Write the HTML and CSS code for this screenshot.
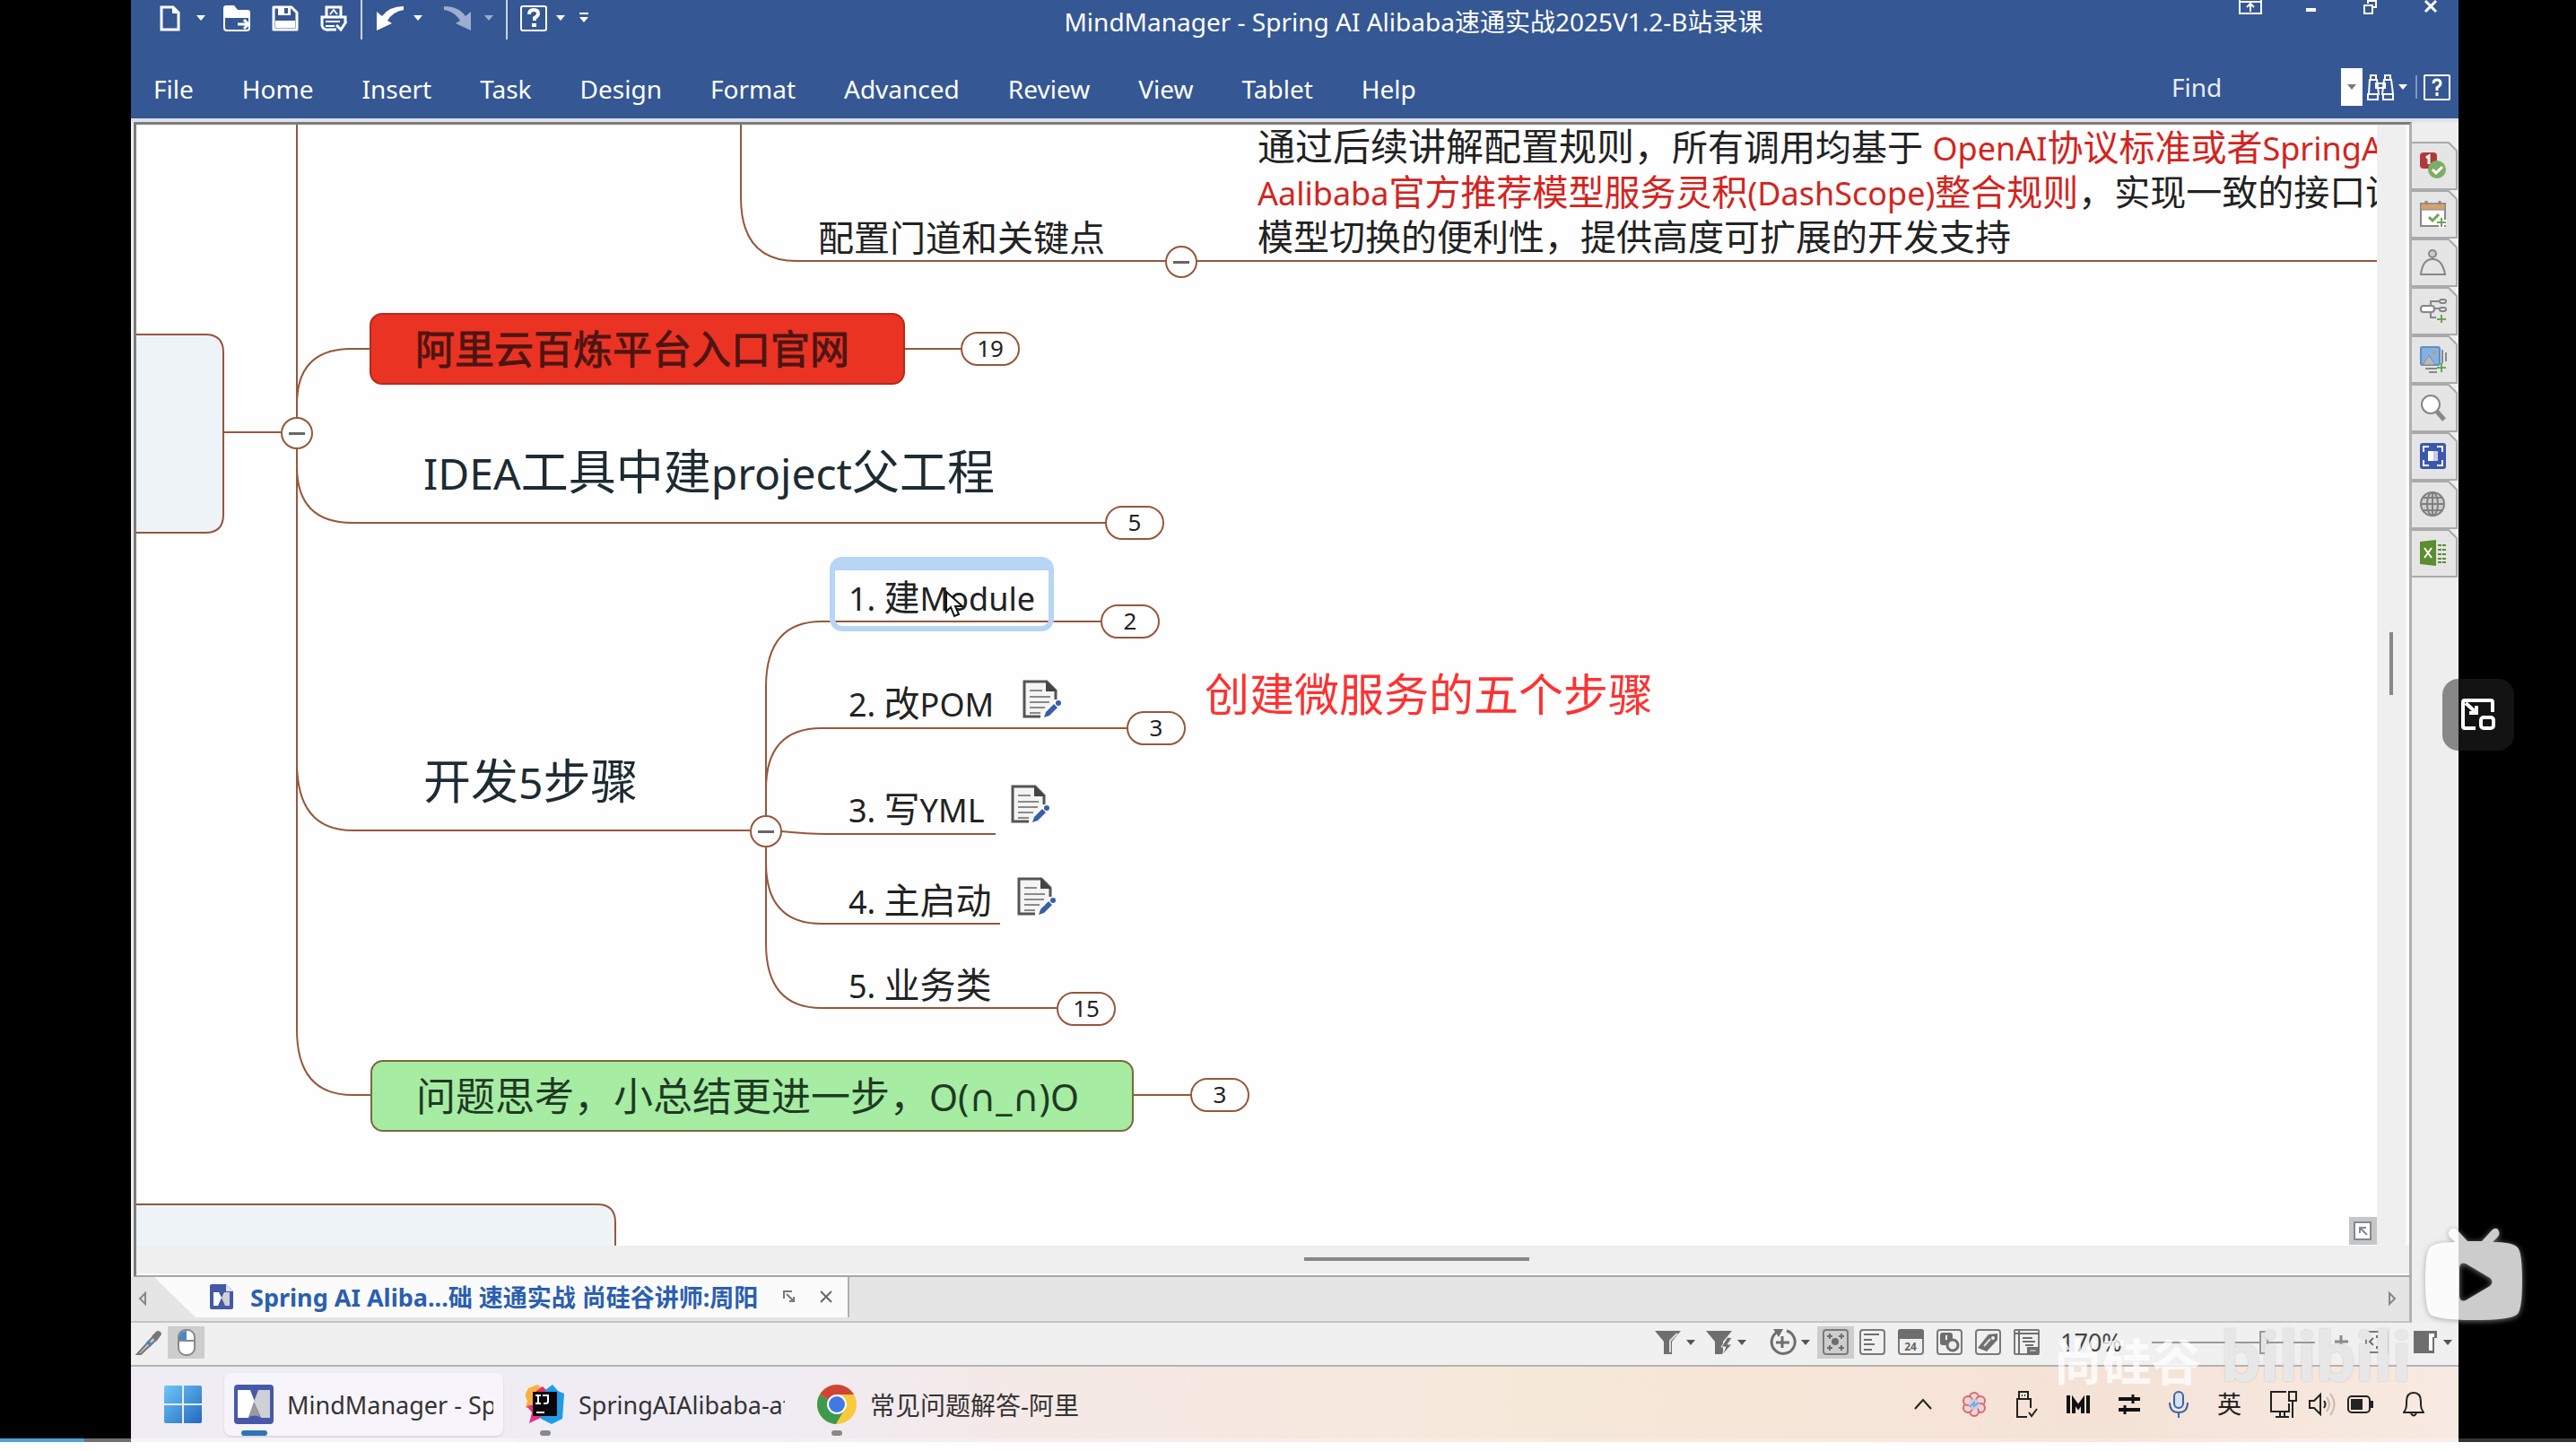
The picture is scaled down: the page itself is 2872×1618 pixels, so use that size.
FILE: index.html
```html
<!DOCTYPE html>
<html lang="zh-CN">
<head>
<meta charset="utf-8">
<meta name="viewport" content="width=device-width, initial-scale=1">
<title>MindManager - Spring AI Alibaba速通实战2025V1.2-B站录课</title>
<link rel="stylesheet" href="styles.css">
</head>
<body>
<svg class="defs" aria-hidden="true">
  <symbol id="caret" viewBox="0 0 10 6"><path d="M0 0h10L5 6z" fill="currentColor"/></symbol>
  <symbol id="note" viewBox="0 0 43 43">
    <path d="M20 41H2V2h25l10 10v10" fill="#f4f4f4" stroke="#555" stroke-width="3"/>
    <path d="M26 1v12h12z" fill="#444"/>
    <path d="M8 12h14M8 19h23M8 25h22M8 31h17M8 37h12" stroke="#8a8a8a" stroke-width="2"/>
    <path d="M24 42l2-6 9-9 4 4-9 9z" fill="#3a5ea8"/><circle cx="40" cy="26" r="3" fill="#3a5ea8"/>
  </symbol>
  <symbol id="mm" viewBox="0 0 44 44">
    <rect width="44" height="44" rx="4" fill="#4659a8"/>
    <path d="M4 6h14l5 13-7 18H4z" fill="#fff"/><path d="M40 6H27l-5 13 8 18h10z" fill="#cfd0d4"/><path d="M22 19l7 17q-6-3-13 0z" fill="#9a9aa0"/>
  </symbol>
</svg>
<main class="player">
  <div class="window">
    <header class="ribbon">
      <div class="titlebar">
        <div class="quick">
          <button aria-label="New"><svg width="23" height="29" viewBox="0 0 23 29"><path d="M2 2h13l6 6v19H2z" fill="none" stroke="#fff" stroke-width="3"/><path d="M14 1v8h8z" fill="#fff"/></svg></button>
          <button class="drop" aria-label="New options"><svg width="10" height="6"><use href="#caret"/></svg></button>
          <button class="open" aria-label="Open"><svg width="30" height="29" viewBox="0 0 30 29"><path d="M0 14V3q0-3 3-3h9l4 5h11q3 0 3 3v6z" fill="#fff"/><path d="M1 12v13q0 3 3 3h22q3 0 3-3V12" fill="none" stroke="#fff" stroke-width="2"/><path d="M16 21h12M23 16l5 5-5 5" fill="none" stroke="#fff" stroke-width="3"/></svg></button>
          <button class="save" aria-label="Save"><svg width="30" height="29" viewBox="0 0 30 29"><path d="M2 2h20l6 6v19H2z" fill="none" stroke="#fff" stroke-width="3" stroke-linejoin="round"/><path d="M7 1h14v10H7zM4 17h22v8H4z" fill="#fff"/><path d="M14 3h4v6h-4z" fill="#355793"/></svg></button>
          <button class="print" aria-label="Print"><svg width="31" height="29" viewBox="0 0 31 29"><path d="M7 12V2h16v10M2 23V13h26v6M2 23q2 5 8 4h8" fill="none" stroke="#fff" stroke-width="3"/><path d="M11 10l4-5 4 5M6 18h16M6 23h10" fill="none" stroke="#fff" stroke-width="2"/><path d="M18 22l5 5 6-9" fill="none" stroke="#fff" stroke-width="3"/></svg></button>
          <span class="rule"></span>
          <button class="undo" aria-label="Undo"><svg width="31" height="29" viewBox="0 0 31 29"><path d="M0 28V7l6 5Q14 1 30 1v4Q18 7 12 17l5 3z" fill="#fff"/></svg></button>
          <button class="drop" aria-label="Undo options"><svg width="10" height="6"><use href="#caret"/></svg></button>
          <button class="redo" aria-label="Redo" disabled><svg width="31" height="29" viewBox="0 0 31 29"><path d="M30 28V7l-6 5Q16 1 0 1v4q12 2 18 12l-5 3z" fill="#9cadd0"/></svg></button>
          <button class="drop dim" aria-label="Redo options" disabled><svg width="10" height="6"><use href="#caret"/></svg></button>
          <span class="rule"></span>
          <button aria-label="Help"><svg width="30" height="29" viewBox="0 0 30 29"><rect x="1" y="1" width="28" height="27" rx="2" fill="none" stroke="#fff" stroke-width="2"/><path d="M10 10q0-5 5-5t5 4q0 3-4 5v3" fill="none" stroke="#fff" stroke-width="4"/><path d="M13 20h5v4h-5z" fill="#fff"/></svg></button>
          <button class="drop" aria-label="Help options"><svg width="10" height="6"><use href="#caret"/></svg></button>
          <button class="custom" aria-label="Customize toolbar"><svg width="10" height="12" viewBox="0 0 10 12"><path d="M0 0h10v2H0zM0 5h10l-5 6z" fill="#fff"/></svg></button>
        </div>
        <h1 class="title">MindManager - Spring AI Alibaba速通实战2025V1.2-B站录课</h1>
        <div class="winbtns">
          <button aria-label="Ribbon display"><svg width="26" height="16" viewBox="0 0 26 16"><path d="M1 0v15h24V0M1 2h24M13 13V5M9 8l4-4 4 4" fill="none" stroke="#fff" stroke-width="2"/></svg></button>
          <button aria-label="Minimize"><svg width="26" height="16" viewBox="0 0 26 16"><path d="M8 9h11v4H8z" fill="#fff"/></svg></button>
          <button aria-label="Restore"><svg width="26" height="16" viewBox="0 0 26 16"><path d="M10 4V1h9v7h-4M6 6h9v9H6z" fill="none" stroke="#fff" stroke-width="2"/></svg></button>
          <button aria-label="Close"><svg width="26" height="16" viewBox="0 0 26 16"><path d="M7 1l12 12M19 1L7 13" stroke="#fff" stroke-width="3"/></svg></button>
        </div>
      </div>
      <div class="menubar">
        <nav class="menus">
          <button>File</button><button>Home</button><button>Insert</button><button>Task</button><button>Design</button><button>Format</button><button>Advanced</button><button>Review</button><button>View</button><button>Tablet</button><button>Help</button>
        </nav>
        <div class="search">
          <input class="find" type="text" placeholder="Find" aria-label="Find">
          <button class="findlist" aria-label="Find history"><svg width="10" height="6"><use href="#caret"/></svg></button>
          <button class="binoc" aria-label="Search"><svg width="30" height="29" viewBox="0 0 30 29"><path d="M4 1h6v5H4zM20 1h6v5h-6zM3 6h8l2 16H2zM19 6h8l2 16H17zM10 10h10v5H10zM1 22h11v6H1zM18 22h11v6H18z" fill="none" stroke="#fff" stroke-width="2"/></svg></button>
          <button aria-label="Search options"><svg width="10" height="6"><use href="#caret"/></svg></button>
          <span class="bar"></span>
          <button aria-label="Help topics"><svg width="30" height="29" viewBox="0 0 30 29"><rect x="1" y="1" width="28" height="27" rx="1" fill="none" stroke="#fff" stroke-width="2"/><path d="M11 10q0-4 4-4t4 4q0 2-4 5v3M15 20v4" fill="none" stroke="#fff" stroke-width="3"/></svg></button>
        </div>
      </div>
    </header>

    <div class="workspace">
      <div class="docs">
        <div class="frame">
          <section class="canvas" aria-label="Mind map">
            <svg class="links" aria-hidden="true">
              <g transform="translate(-152 -139)" fill="none" stroke="#96573c" stroke-width="2">
                <path d="M120 373H229q20 0 20 20V574q0 20-20 20H120z" fill="#eef3f8"/>
                <path d="M120 1343H666q20 0 20 20v60H120z" fill="#eef3f8"/>
                <path d="M249 482H313M331 100V1148q0 73 62 73h20M413 389h-25q-57 2-57 62V520q0 63 62 63h840M331 850q0 76 62 76h443"/>
                <path d="M826 100V220q0 71 62 71h412M1334 291H2700M1009 389h64M1264 1221h64"/>
                <path d="M854 927V766q0-73 62-73h312M854 880q0-68 62-68h341M871 927q30 3 50 3h189M854 927v35q0 68 62 68h199M854 927V1052q0 72 62 72h262"/>
              </g>
            </svg>
            <p class="topic t-config">配置门道和关键点</p>
            <p class="topic t-para"><b>通过后续讲解配置规则，</b>所有调用均基于 <em><i>OpenAI</i>协议标准或者<i>SpringAI</i></em><br><em><i>Aalibaba</i>官方推荐模型服务灵积<i>(DashScope)</i>整合规则</em>，实现一致的接口设计<br>模型切换的便利性，提供高度可扩展的开发支持</p>
            <p class="topic box t-red">阿里云百炼平台入口官网</p>
            <p class="topic big t-idea"><i>IDEA</i>工具中建<i>project</i>父工程</p>
            <p class="topic big t-dev">开发<i>5</i>步骤</p>
            <span class="selection"></span>
            <p class="topic t-s1"><i>1. </i>建<i>Module</i></p>
            <p class="topic t-s2"><i>2. </i>改<i>POM</i></p>
            <p class="topic t-s3"><i>3. </i>写<i>YML</i></p>
            <p class="topic t-s4"><i>4. </i>主启动</p>
            <p class="topic t-s5"><i>5. </i>业务类</p>
            <p class="topic box t-green">问题思考，小总结更进一步，<i>O(<span class="eye">∩</span>_<span class="eye">∩</span>)O</i></p>
            <svg class="note n2" role="img" aria-label="Notes"><use href="#note"/></svg>
            <svg class="note n3" role="img" aria-label="Notes"><use href="#note"/></svg>
            <svg class="note n4" role="img" aria-label="Notes"><use href="#note"/></svg>
            <button class="toggle g-config" aria-label="Collapse"></button>
            <button class="toggle g-root" aria-label="Collapse"></button>
            <button class="toggle g-dev" aria-label="Collapse"></button>
            <button class="count c-19">19</button>
            <button class="count c-5">5</button>
            <button class="count c-2">2</button>
            <button class="count c-3a">3</button>
            <button class="count c-15">15</button>
            <button class="count c-3b">3</button>
            <p class="remark">创建微服务的五个步骤</p>
            <svg class="cursor" width="22" height="32" viewBox="0 0 22 32" aria-hidden="true"><path d="M2 2v22l5-5 4 10 5-2-4-9h8z" fill="#fff" stroke="#111" stroke-width="2"/></svg>
            <button class="fit" aria-label="Overview"><svg width="31" height="31" viewBox="0 0 31 31"><rect width="31" height="31" fill="#c4c6c8"/><rect x="6" y="6" width="18" height="19" fill="#fff" stroke="#85888b" stroke-width="2"/><path d="M12 18v-6h7M12 12l8 8" fill="none" stroke="#85888b" stroke-width="2"/></svg></button>
          </section>
          <div class="vscroll"><span></span></div>
          <div class="hscroll"><span></span></div>
        </div>
        <div class="tabstrip">
          <button class="tabnav" aria-label="Previous tab"><svg width="12" height="18" viewBox="0 0 12 18"><path d="M9 3v12L3 9z" fill="none" stroke="#888" stroke-width="2"/></svg></button>
          <div class="doctab">
            <svg width="26" height="28" viewBox="0 0 26 28"><path d="M0 2q0-2 2-2h16l8 8v18q0 2-2 2H2q-2 0-2-2z" fill="#4659a8"/><path d="M18 0l8 8h-8z" fill="#dfe3f5"/><path d="M4 9h6l3 6-4 9H4z" fill="#fff"/><path d="M22 9h-6l-3 6 4 9h5z" fill="#cfd0d4"/></svg>
            <strong>Spring AI Aliba...础 速通实战 尚硅谷讲师:周阳</strong>
            <button aria-label="Float tab"><svg width="14" height="14" viewBox="0 0 14 14"><path d="M1 9V1h9M4 4l8 8M12 7v5H7" fill="none" stroke="#777" stroke-width="2"/></svg></button>
            <button class="x" aria-label="Close tab"><svg width="14" height="14" viewBox="0 0 14 14"><path d="M1 1l12 12M13 1L1 13" stroke="#666" stroke-width="2"/></svg></button>
          </div>
          <button class="tabnav next" aria-label="Next tab"><svg width="12" height="18" viewBox="0 0 12 18"><path d="M3 3v12l6-6z" fill="none" stroke="#888" stroke-width="2"/></svg></button>
        </div>
      </div>
      <aside class="panes">
        <button aria-label="Index"><svg viewBox="0 0 52 54"><path class="tab" d="M0 1H41L50 10V53H0"/><g transform="translate(9 12)"><rect width="19" height="18" rx="4" fill="#b03a3a"/><path d="M7 6l3-2v9" fill="none" stroke="#fff" stroke-width="3"/><circle cx="19" cy="19" r="10" fill="#7cae68"/><path d="M14 19l4 4 7-7" fill="none" stroke="#fff" stroke-width="3"/></g></svg></button>
        <button aria-label="Tasks"><svg viewBox="0 0 52 54"><path class="tab" d="M0 1H41L50 10V53H0"/><g transform="translate(9 12)"><path d="M1 3h27v25H1z" fill="#fff" stroke="#888" stroke-width="2"/><path d="M1 3h27v7H1z" fill="#d3a36c" stroke="#888"/><path d="M7 0v4M22 0v4" stroke="#888" stroke-width="3"/><path d="M10 18l4 4 7-7" fill="none" stroke="#6aa555" stroke-width="3"/><path d="M24 17v13M18 24h12" stroke="#fff" stroke-width="6"/><path d="M24 19v10M19 24h10" stroke="#6aa555" stroke-width="2"/></g></svg></button>
        <button aria-label="Resources"><svg viewBox="0 0 52 54"><path class="tab" d="M0 1H41L50 10V53H0"/><g transform="translate(9 12)" fill="none" stroke="#868686" stroke-width="2"><circle cx="14" cy="5" r="4" fill="#ccc"/><path d="M1 28q2-17 13-17t14 17z"/></g></svg></button>
        <button aria-label="Map parts"><svg viewBox="0 0 52 54"><path class="tab" d="M0 1H41L50 10V53H0"/><g transform="translate(9 12)" fill="none" stroke="#868686" stroke-width="2"><rect x="1" y="9" width="15" height="7" rx="3" fill="#fff"/><path d="M16 12h6M12 9V4h9M12 16v6h6"/><rect x="22" y="2" width="7" height="4" rx="2"/><rect x="22" y="11" width="7" height="4" rx="2"/><path d="M24 19v9M19 24h10" stroke="#6aa555"/></g></svg></button>
        <button aria-label="Library"><svg viewBox="0 0 52 54"><path class="tab" d="M0 1H41L50 10V53H0"/><g transform="translate(9 12)"><rect x="1" y="1" width="21" height="20" rx="2" fill="#84b1e2" stroke="#5d8dc9" stroke-width="2"/><path d="M3 21l7-11 7 11z" fill="#b9b9b9" stroke="#888"/><circle cx="16" cy="7" r="2" fill="#b7a25a"/><path d="M25 4v15M29 7v10M6 25h13M10 29h9" fill="none" stroke="#888" stroke-width="2"/><path d="M24 19v10M19 24h10" stroke="#6aa555" stroke-width="2"/></g></svg></button>
        <button aria-label="Search pane"><svg viewBox="0 0 52 54"><path class="tab" d="M0 1H41L50 10V53H0"/><g transform="translate(9 12)"><path d="M19 19l8 9" stroke="#888" stroke-width="5"/><circle cx="12" cy="11" r="10" fill="#fff" stroke="#868686" stroke-width="2"/></g></svg></button>
        <button aria-label="Snap"><svg viewBox="0 0 52 54"><path class="tab" d="M0 1H41L50 10V53H0"/><g transform="translate(9 12)"><rect width="29" height="29" rx="3" fill="#3b57ae"/><path d="M4 10V4h6M19 4h6v6M25 19v6h-6M10 25H4v-6" fill="none" stroke="#fff" stroke-width="2"/><path d="M9 9h6v11H9z" fill="#fff"/><path d="M15 9h5v11h-5z" fill="#c9cde2"/></g></svg></button>
        <button aria-label="Browser"><svg viewBox="0 0 52 54"><path class="tab" d="M0 1H41L50 10V53H0"/><g transform="translate(9 12)" fill="none" stroke="#808080" stroke-width="2"><circle cx="14" cy="14" r="13" fill="#ccc"/><ellipse cx="14" cy="14" rx="6" ry="13"/><path d="M1 14h26M3 7h22M3 21h22M14 1v26"/></g></svg></button>
        <button aria-label="Excel"><svg viewBox="0 0 52 54"><path class="tab" d="M0 1H41L50 10V53H0"/><g transform="translate(9 12)"><path d="M0 2l18-2v29l-18-2z" fill="#5c8d2f"/><path d="M5 9l8 11M13 9L5 20" stroke="#fff" stroke-width="2"/><path d="M20 6h9M20 11h9M20 16h9M20 21h9M20 25h9" stroke="#5c8d2f" stroke-width="2" stroke-dasharray="4 1"/></g></svg></button>
      </aside>
    </div>

    <div class="statusbar">
      <div class="modes">
        <button aria-label="Pen"><svg width="32" height="30" viewBox="0 0 32 30"><path d="M3 28L20 9l4 3L7 28z" fill="#c8c8c8" stroke="#777" stroke-width="2"/><path d="M19 8l6-6q5 0 5 4l-5 7z" fill="#777"/><path d="M14 14l5 4" stroke="#4d86c8" stroke-width="4"/></svg></button>
        <button class="on" aria-label="Mouse"><svg width="20" height="30" viewBox="0 0 20 30"><rect x="1" y="1" width="18" height="28" rx="8" fill="#fff" stroke="#888" stroke-width="2"/><path d="M2 13V9q0-7 8-7v11z" fill="#4d86c8"/><path d="M2 13h16" stroke="#888" stroke-width="2"/></svg></button>
      </div>
      <div class="views">
        <button class="pair" aria-label="Filter"><svg width="30" height="29" viewBox="0 0 30 29"><path d="M0 2h29L19 14v14h-9V14z" fill="#6e6e6e"/><path d="M25 5l-8 8v13" fill="none" stroke="#ddd" stroke-width="2"/></svg><svg width="10" height="6"><use href="#caret"/></svg></button>
        <button class="pair wide" aria-label="Power filter"><svg width="30" height="29" viewBox="0 0 30 29"><path d="M0 2h29L19 14v14h-9V14z" fill="#6e6e6e"/><path d="M24 9l-7 11h5l-4 9 11-12h-5l5-7z" fill="#6e6e6e" stroke="#eee" stroke-width="1"/></svg><svg width="10" height="6"><use href="#caret"/></svg></button>
        <button class="pair" aria-label="Show detail"><svg width="30" height="29" viewBox="0 0 30 29"><path d="M19 2a13 13 0 1 1-10 1M14 8v13M7 15h15" fill="none" stroke="#6e6e6e" stroke-width="3"/><path d="M4 0h11l-5 9z" fill="#6e6e6e"/></svg><svg width="10" height="6"><use href="#caret"/></svg></button>
        <button class="view on" aria-label="Map view"><svg width="29" height="29" viewBox="0 0 29 29"><rect class="o" x="1" y="1" width="27" height="27" rx="3"/><circle cx="14" cy="14" r="4" fill="#6e6e6e"/><path d="M5 8h6M8 5v6M18 8h6M21 5v6M5 21h6M8 18v6M18 21h6M21 18v6" stroke="#6e6e6e" stroke-width="2"/></svg></button>
        <button class="view" aria-label="Outline view"><svg width="29" height="29" viewBox="0 0 29 29"><rect class="o" x="1" y="1" width="27" height="27" rx="3"/><path d="M5 6h17M5 12h9M5 17h12M5 23h9" stroke="#6e6e6e" stroke-width="2"/></svg></button>
        <button class="view" aria-label="Schedule view"><svg width="29" height="29" viewBox="0 0 29 29"><rect class="o" x="1" y="1" width="27" height="27" rx="3"/><path d="M0 3q0-3 3-3h23q3 0 3 3v8H0z" fill="#6e6e6e"/><text x="14" y="24" class="day">24</text></svg></button>
        <button class="view" aria-label="Icon view"><svg width="29" height="29" viewBox="0 0 29 29"><rect class="o" x="1" y="1" width="27" height="27" rx="3"/><rect x="4" y="4" width="14" height="14" rx="3" fill="#6e6e6e"/><circle cx="18" cy="18" r="6" fill="#eee" stroke="#6e6e6e" stroke-width="3"/><path d="M11 7v5" stroke="#fff" stroke-width="2"/></svg></button>
        <button class="view" aria-label="Tag view"><svg width="29" height="29" viewBox="0 0 29 29"><rect class="o" x="1" y="1" width="27" height="27" rx="3"/><path d="M3 21L15 6l10-1v7L13 25z" fill="#6e6e6e"/><circle cx="20" cy="10" r="2" fill="#eee"/><path d="M10 19l7-8" stroke="#ddd" stroke-width="2"/></svg></button>
        <button class="view" aria-label="Gantt view"><svg width="29" height="29" viewBox="0 0 29 29"><rect class="o" x="1" y="1" width="27" height="27" rx="1"/><path d="M1 5h27M6 1v27M10 10h11M10 14h14M13 18h9" stroke="#6e6e6e" stroke-width="2"/><path d="M15 20h13v9H15z" fill="#6e6e6e"/><path d="M18 24h7" stroke="#eee"/></svg></button>
        <output class="percent">170%</output>
        <input class="zoom" type="range" min="0" max="100" value="70" aria-label="Zoom">
        <button class="plus" aria-label="Zoom in"><svg width="15" height="15" viewBox="0 0 15 15"><path d="M7 0v15M0 7h15" stroke="#8a8a8a" stroke-width="3"/></svg></button>
        <button class="fitmap" aria-label="Fit map"><svg width="26" height="25" viewBox="0 0 26 25"><rect class="o" x="1" y="1" width="24" height="23"/><path d="M9 8l-4 4 4 4M17 8l4 4-4 4M13 5v3M13 17v3" fill="none" stroke="#6e6e6e" stroke-width="2"/></svg></button>
        <button class="pair" aria-label="Task panes"><svg width="26" height="25" viewBox="0 0 26 25"><path d="M0 0h26v8h-3v17H0z" fill="#6e6e6e"/><path d="M17 3h6v4h-2v15h-4z" fill="#fff"/></svg><svg width="10" height="6"><use href="#caret"/></svg></button>
      </div>
    </div>

    <footer class="taskbar">
      <div class="apps">
        <button class="start" aria-label="Start"><svg width="42" height="42" viewBox="0 0 42 42"><defs><linearGradient id="w" x1="0" y1="0" x2="1" y2="1"><stop offset="0" stop-color="#6cc8f8"/><stop offset="1" stop-color="#2468bf"/></linearGradient></defs><path d="M2 0h18v20H0V2q0-2 2-2zM22 0h18q2 0 2 2v18H22zM0 22h20v20H2q-2 0-2-2zM22 22h20v18q0 2-2 2H22z" fill="url(#w)"/></svg></button>
        <button class="app active"><svg width="44" height="44"><use href="#mm"/></svg><span>MindManager - Spring</span></button>
        <button class="app"><svg width="44" height="44" viewBox="0 0 44 44"><path d="M3 4l10-4 10 6-4 20H0l2-8-3-6z" fill="#fbb040"/><path d="M1 24l18-4v16L4 43l3-12z" fill="#e8338b"/><path d="M12 7l7-5 7 7v10H8z" fill="#e03060"/><path d="M22 6l8-6 6 7 7 3-2 28-12 6-12-6z" fill="#1f9be8"/><rect x="8" y="8" width="27" height="27" fill="#0a0508"/><path d="M11 12h6M14 12v9M11 21h6M19 12h6v7q0 2-3 2h-2M12 31h9" fill="none" stroke="#fff" stroke-width="2"/></svg><span>SpringAIAlibaba-atguigu</span></button>
        <button class="app"><svg width="44" height="44" viewBox="0 0 44 44"><circle cx="22" cy="22" r="22" fill="#f8c93d"/><path d="M22 22L3 11a22 22 0 0 0 18 33l10-17z" fill="#3d9a4c"/><path d="M22 22L3 11A22 22 0 0 1 41 11H22z" fill="#d04437"/><circle cx="22" cy="22" r="11" fill="#fff"/><circle cx="22" cy="22" r="9" fill="#4079e6"/></svg><span class="cjk">常见问题解答-阿里</span></button>
      </div>
      <div class="tray">
        <button aria-label="Hidden icons"><svg width="20" height="28" viewBox="0 0 20 28"><path d="M1 19l9-10 9 10" fill="none" stroke="#222" stroke-width="2"/></svg></button>
        <button aria-label="Assistant"><svg width="30" height="30" viewBox="0 0 30 30"><g fill="#f7d3d3" stroke="#d56a70" stroke-width="2"><circle cx="15" cy="7" r="5"/><circle cx="22" cy="11" r="5"/><circle cx="22" cy="19" r="5"/><circle cx="15" cy="23" r="5"/><circle cx="8" cy="19" r="5"/><circle cx="8" cy="11" r="5"/></g><circle cx="15" cy="15" r="6" fill="#c4cfe6"/><path d="M10 18l5-5v4l5-4" fill="none" stroke="#7fa5d5" stroke-width="2"/></svg></button>
        <button aria-label="Safely remove hardware"><svg width="24" height="30" viewBox="0 0 24 30"><path d="M3 9V1h10v8M16 19V9H1v20h11M14 24l3 4 6-8M6 5h1M9 5h1" fill="none" stroke="#222" stroke-width="2"/></svg></button>
        <button aria-label="M"><svg width="26" height="22" viewBox="0 0 26 22"><path d="M2 1v20M24 1v20M8 21V7l5 7 5-7v14" fill="none" stroke="#111" stroke-width="4"/></svg></button>
        <button aria-label="Audio settings"><svg width="24" height="24" viewBox="0 0 24 24"><path d="M0 6h24M0 18h24" stroke="#111" stroke-width="4"/><path d="M16 1v10M7 13v10" stroke="#111" stroke-width="3"/></svg></button>
        <button aria-label="Microphone"><svg width="22" height="30" viewBox="0 0 22 30"><rect x="6" y="1" width="10" height="18" rx="5" fill="#d7e3f4" stroke="#3c62a8" stroke-width="2"/><path d="M1 13q0 11 10 11t10-11M11 24v6" fill="none" stroke="#3c62a8" stroke-width="2"/></svg></button>
        <button class="ime">英</button>
        <button class="status" aria-label="Network, volume, battery"><svg width="30" height="30" viewBox="0 0 30 30"><path d="M18 1H1v22h20v-9M6 29h15M11 23v6M16 23v6M21 1h8v10h-8zM25 11v19" fill="none" stroke="#222" stroke-width="2"/></svg><svg width="30" height="26" viewBox="0 0 30 26"><path d="M1 9h5l7-7v22l-7-7H1zM17 9q3 4 0 8" fill="none" stroke="#222" stroke-width="2"/><path d="M20 5q6 8 0 16M24 1q9 12 0 24" fill="none" stroke="#c9b8b0" stroke-width="2"/></svg><svg width="30" height="20" viewBox="0 0 30 20"><rect x="1" y="1" width="24" height="18" rx="4" fill="none" stroke="#222" stroke-width="2"/><path d="M4 4h13v12H4zM26 6h3v8h-3z" fill="#222"/></svg></button>
        <button aria-label="Notifications"><svg width="24" height="28" viewBox="0 0 24 28"><path d="M1 23q3-4 3-8v-4q0-10 8-10t8 10v4q0 4 3 8zM9 24q3 5 6 0" fill="none" stroke="#222" stroke-width="2"/></svg></button>
      </div>
    </footer>
  </div>

  <span class="mark author">尚硅谷</span>
  <span class="mark site">bilibili</span>
  <button class="pip" aria-label="Picture in picture"><svg width="38" height="38" viewBox="0 0 38 38"><path d="M16 34H4q-2 0-2-2V5q0-2 2-2h29q2 0 2 2v11M5 6l11 10M17 9v8H9" fill="none" stroke="#fff" stroke-width="4"/><rect x="22" y="22" width="14" height="12" rx="3" fill="none" stroke="#fff" stroke-width="4"/></svg></button>
  <svg class="tv" viewBox="0 0 108 104" role="img" aria-label="bilibili"><path fill-rule="evenodd" fill="#fff" d="M28 2q4-3 8 1l11 12h16L74 3q4-4 7-1 3 4 0 8l-6 6q22 0 28 6 5 6 5 37t-5 37q-6 7-49 7T5 96Q0 90 0 59t5-37q6-6 28-6l-6-6q-3-4 1-8zM38 44v33q1 6 7 4l27-16q5-5 0-9L45 40q-6-2-7 4z"/></svg>
  <div class="progress"><span class="buffer"></span><span class="played"></span></div>
</main>
</body>
</html>
```
FILE: styles.css
```css
* { box-sizing: border-box; }

body {
  margin: 0;
  height: 100vh;
  padding-bottom: 10px;
  display: flex;
  flex-direction: column;
  background: #fff;
  font-family: "Noto Sans", "Noto Sans CJK SC", sans-serif;
  color: #222;
}

button {
  margin: 0;
  padding: 0;
  border: 0;
  background: none;
  color: inherit;
  font: inherit;
  display: flex;
  align-items: center;
  justify-content: center;
}

svg { display: block; flex: none; }
.defs { position: absolute; width: 0; height: 0; }
p, h1 { margin: 0; }

.player {
  position: relative;
  flex: 1;
  min-height: 0;
  padding: 0 131px 0 146px;
  background: #000;
}

.window {
  height: 100%;
  display: flex;
  flex-direction: column;
  background: #efefef;
}

/* Title bar and menus */
.ribbon { background: #355793; color: #fff; }
.titlebar { display: flex; height: 66px; align-items: flex-start; }
.quick { display: flex; align-items: center; height: 40px; padding-left: 32px; }
.quick .drop { width: 10px; margin-left: 18px; }
.quick .undo + .drop, .quick .redo + .drop { margin-left: 14px; }
.quick .rule + button + .drop { margin-left: 10px; }
.quick .drop.dim { color: #9cadd0; }
.quick .open { margin-left: 20px; }
.quick .save { margin-left: 24px; }
.quick .print { margin-left: 24px; }
.quick .undo { margin-left: 2px; }
.quick .undo + .drop { margin-left: 14px; }
.quick .redo { margin-left: 24px; }
.quick .custom { margin-left: 16px; }
.rule { width: 2px; height: 48px; margin: 0 14px 0 14px; background: #c9d3e6; }
.title { flex: 1; text-align: center; font-size: 28px; font-weight: 400; line-height: 48px; }
.winbtns { display: flex; gap: 41px; padding-right: 18px; }

.menubar { display: flex; justify-content: space-between; align-items: center; height: 66px; }
.menus { display: flex; gap: 54px; padding-left: 25px; font-size: 28px; }
.search { display: flex; align-items: center; padding-right: 9px; gap: 5px; height: 60px; margin-bottom: 4px; }
.find { width: 184px; border: 0; background: none; color: #fff; font: 28px "Noto Sans", sans-serif; padding: 0; }
.find::placeholder { color: #e8edf6; opacity: 1; }
.findlist { width: 24px; height: 42px; background: #fff; color: #777; }
.bar { width: 2px; height: 26px; background: #7f96c0; }
.search .bar { margin: 0 2px 0 4px; }

/* Document area */
.workspace { flex: 1; min-height: 0; display: flex; border-top: 4px solid #dde1ea; }
.docs { flex: 1; min-width: 0; display: flex; flex-direction: column; }
.frame {
  flex: 1;
  min-height: 0;
  display: grid;
  grid-template: 1fr 33px / 1fr 36px;
  border: 3px solid #7d7d7d;
  border-right-color: #b0b0b0;
  border-bottom: 2px solid #a6a6a6;
  margin-left: 3px;
}
.canvas { position: relative; overflow: hidden; background: #fefefe; }
.vscroll { display: flex; align-items: center; justify-content: center; border-right: 4px solid #fafafa; }
.vscroll span { width: 4px; height: 70px; margin-bottom: 49px; background: #888; }
.hscroll { grid-column: 1 / 3; display: flex; justify-content: center; border-bottom: 2px solid #fafafa; }
.hscroll span { width: 251px; height: 4px; margin: 13px 0 0 321px; background: #888; }

/* Mind map */
.links { position: absolute; left: 0; top: 0; width: 100%; height: 100%; }
.topic { position: absolute; font-size: 40px; line-height: 50px; white-space: pre; color: #222; }
.topic i { font-style: normal; font-size: 36px; line-height: 1; }
.topic em { font-style: normal; color: #d32420; }
.topic b { font-weight: 400; font-size: 42px; line-height: 1; }
.topic.big { font-size: 53px; line-height: 60px; color: #1d2b33; }
.topic.big i { font-size: 48px; }
.topic.box { font-size: 44px; line-height: 76px; padding-left: 49px; border: 2px solid; border-radius: 14px; }
.t-config { left: 760px; top: 101px; }
.t-para { left: 1250px; top: 0; }
.topic.t-red { left: 260px; top: 210px; width: 597px; background: #eb3323; border-color: #b52a1c; color: #4d1512; -webkit-text-stroke: 1px #4d1512; }
.t-idea { left: 320px; top: 357px; }
.t-dev { left: 320px; top: 702px; }
.t-s1 { left: 794px; top: 502px; }
.t-s2 { left: 794px; top: 620px; }
.t-s3 { left: 794px; top: 738px; }
.t-s4 { left: 794px; top: 840px; }
.t-s5 { left: 794px; top: 934px; }
.topic.t-green { left: 261px; top: 1043px; width: 851px; background: #a6eca3; border-color: #7a6a3a; color: #1f3a24; }
.topic.t-green i { font-size: 41px; }
.eye { font-family: "DejaVu Sans", sans-serif; }
.selection { position: absolute; left: 773px; top: 482px; width: 250px; height: 83px; border: 6px solid #b7d5f5; border-top-width: 15px; border-radius: 14px; }
.note { position: absolute; width: 43px; height: 43px; }
.n2 { left: 988px; top: 619px; }
.n3 { left: 975px; top: 736px; }
.n4 { left: 982px; top: 839px; }
.toggle { position: absolute; width: 36px; height: 36px; border: 2px solid #96573c; border-radius: 50%; background: #fff; }
.toggle::before { content: ""; width: 18px; height: 3px; background: #666; }
.g-config { left: 1147px; top: 135px; }
.g-root { left: 161px; top: 326px; }
.g-dev { left: 684px; top: 770px; }
.count { position: absolute; width: 66px; height: 38px; border: 2px solid #96573c; border-radius: 19px; background: #fff; font-size: 26px; line-height: 32px; padding-bottom: 2px; }
.c-19 { left: 919px; top: 231px; }
.c-5 { left: 1080px; top: 425px; }
.c-2 { left: 1075px; top: 535px; }
.c-3a { left: 1104px; top: 654px; }
.c-15 { left: 1026px; top: 967px; }
.c-3b { left: 1175px; top: 1063px; }
.remark { position: absolute; left: 1191px; top: 602px; font-size: 50px; line-height: 60px; color: #fd3231; font-family: "Noto Sans CJK SC", sans-serif; }
.cursor { position: absolute; left: 901px; top: 519px; }
.fit { position: absolute; right: 0; bottom: 1px; }

/* Document tabs */
.tabstrip { display: flex; align-items: stretch; height: 51px; background: #e5e5e5; border-bottom: 2px solid #c4c4c4; border-right: 3px solid #b0b0b0; }
.tabnav { width: 26px; padding-bottom: 2px; }
.tabnav.next { margin-left: auto; padding-right: 12px; }
.doctab {
  display: flex;
  align-items: center;
  height: 45px;
  padding: 0 17px 2px 62px;
  background: #fbfbfb;
  border-right: 2px solid #b0b0b0;
  clip-path: polygon(0 0, 100% 0, 100% 100%, 46px 100%);
  font-size: 27px;
  color: #2b5fb0;
}
.doctab strong { margin: 0 28px 0 19px; white-space: nowrap; }
.doctab .x { margin-left: 27px; }

/* Task pane tabs */
.panes { width: 52px; padding-top: 22px; background: #eee; }
.panes button { width: 52px; height: 54px; }
.panes svg { width: 52px; height: 54px; }
.tab { fill: #e5e5e5; stroke: #aaa; stroke-width: 2; }

/* Status bar */
.statusbar { display: flex; justify-content: space-between; align-items: center; height: 49px; padding-bottom: 4px; background: #f0f0f0; border-bottom: 2px solid #b3b3b5; color: #555; }
.modes { display: flex; padding-left: 4px; gap: 5px; }
.on { width: 41px; height: 36px; background: #cdcdcd; }
.views { display: flex; align-items: center; padding-right: 7px; }
.pair { gap: 5px; margin-right: 12px; }
.pair.wide { margin-right: 26px; }
.pair:last-child { margin-right: 0; gap: 7px; }
.view { width: 43px; }
.view.on { width: 41px; margin-right: -1px; margin-left: -4px; }
.o { fill: none; stroke: #7a7a7a; stroke-width: 2; }
.day { font: 700 12px "Noto Sans", sans-serif; text-anchor: middle; fill: #666; }
.percent { width: 72px; margin-left: 16px; font-size: 27px; line-height: 36px; color: #444; }
.zoom { appearance: none; width: 182px; height: 26px; margin: 0 22px 0 30px; background: linear-gradient(#999, #999) center / 100% 2px no-repeat; }
.zoom::-webkit-slider-thumb { appearance: none; width: 10px; height: 26px; background: #e6e6e6; border: 2px solid #999; }
.fitmap { margin: 0 28px 0 19px; }

/* Windows taskbar */
.taskbar { display: flex; justify-content: space-between; height: 84px; background: linear-gradient(90deg, #efecf4 0, #efecf3 28%, #f5e9e7 38%, #f6e8d9 60%, #f4e2d6 85%, #f8eae2); }
.apps { display: flex; align-items: center; font-size: 27px; color: #333; }
.start { margin: 0 25px 0 37px; }
.app { position: relative; height: 70px; padding: 0 11px; margin-right: 14px; gap: 15px; border-radius: 8px; }
.app.active { background: #f7f5fb; box-shadow: 0 1px 2px #cfccd4; }
.app span { width: 230px; overflow: hidden; white-space: nowrap; text-align: left; }
.app .cjk { font-size: 28px; width: auto; }
.app::after { content: ""; position: absolute; left: 27px; bottom: 0; width: 12px; height: 6px; border-radius: 3px; background: #8b888c; }
.app.active::after { left: 19px; width: 29px; background: #2f76b8; }
.tray { display: flex; align-items: center; padding-right: 38px; gap: 32px; }
.ime { font-size: 27px; line-height: 30px; }
.status { gap: 13px; }

/* Video overlays */
.mark { position: absolute; color: rgba(255, 255, 255, 0.75); white-space: nowrap; }
.author { right: 418px; bottom: 63px; font: 700 55px/60px "Noto Sans CJK SC", sans-serif; }
.site { right: 184px; bottom: 44px; font: 700 78px/100px Roboto, sans-serif; color: rgba(238, 238, 238, 0.85); text-shadow: 0 0 2px #bbb; }
.pip { position: absolute; right: 69px; top: 757px; width: 80px; height: 80px; border-radius: 18px; background: rgba(37, 37, 37, 0.51); }
.tv { position: absolute; right: 60px; bottom: 135px; width: 108px; height: 104px; opacity: 0.8; filter: drop-shadow(0 1px 3px #999); }
.progress { position: absolute; left: 0; right: 0; bottom: 0; height: 4px; background: rgba(255, 255, 255, 0.2); }
.buffer, .played { position: absolute; left: 0; top: 0; height: 4px; }
.buffer { width: 20%; background: rgba(255, 255, 255, 0.3); }
.played { width: 94px; background: #4aa3dc; }
```
